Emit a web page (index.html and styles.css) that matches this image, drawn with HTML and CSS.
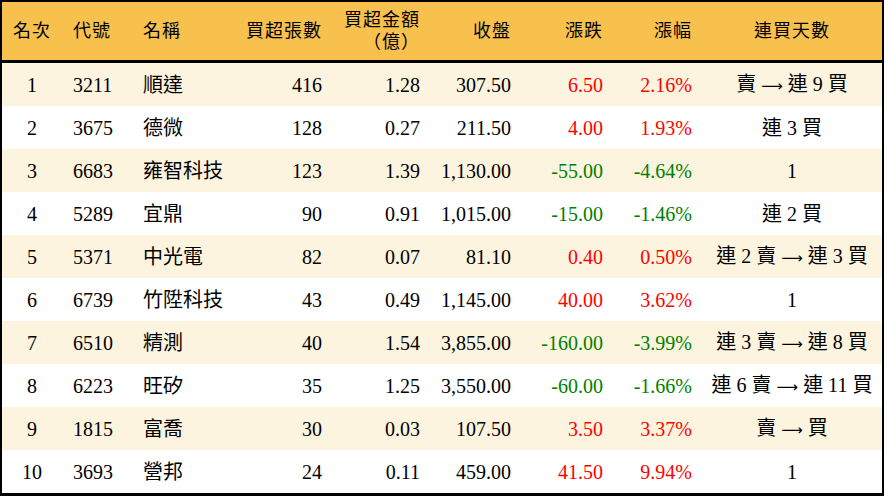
FILE: index.html
```html
<!DOCTYPE html>
<html lang="zh-Hant">
<head>
<meta charset="utf-8">
<link rel="stylesheet" href="styles.css">
</head>
<body>
<table class="rank">
  <colgroup>
    <col class="c1"><col class="c2"><col class="c3"><col class="c4"><col class="c5"><col class="c6"><col class="c7"><col class="c8"><col class="c9">
  </colgroup>
  <thead>
    <tr>
      <th class="ctr">名次</th>
      <th class="lft">代號</th>
      <th class="lft name">名稱</th>
      <th class="rgt">買超張數</th>
      <th class="rgt two">買超金額<br>（億）</th>
      <th class="rgt">收盤</th>
      <th class="rgt">漲跌</th>
      <th class="rgt">漲幅</th>
      <th class="ctr">連買天數</th>
    </tr>
  </thead>
  <tbody>
    <tr class="odd"><td class="ctr">1</td><td class="lft">3211</td><td class="lft name">順達</td><td class="rgt">416</td><td class="rgt">1.28</td><td class="rgt">307.50</td><td class="rgt up">6.50</td><td class="rgt up">2.16%</td><td class="ctr">賣 <span class="arr">⟶</span> 連 9 買</td></tr>
    <tr><td class="ctr">2</td><td class="lft">3675</td><td class="lft name">德微</td><td class="rgt">128</td><td class="rgt">0.27</td><td class="rgt">211.50</td><td class="rgt up">4.00</td><td class="rgt up">1.93%</td><td class="ctr">連 3 買</td></tr>
    <tr class="odd"><td class="ctr">3</td><td class="lft">6683</td><td class="lft name">雍智科技</td><td class="rgt">123</td><td class="rgt">1.39</td><td class="rgt">1,130.00</td><td class="rgt down">-55.00</td><td class="rgt down">-4.64%</td><td class="ctr">1</td></tr>
    <tr><td class="ctr">4</td><td class="lft">5289</td><td class="lft name">宜鼎</td><td class="rgt">90</td><td class="rgt">0.91</td><td class="rgt">1,015.00</td><td class="rgt down">-15.00</td><td class="rgt down">-1.46%</td><td class="ctr">連 2 買</td></tr>
    <tr class="odd"><td class="ctr">5</td><td class="lft">5371</td><td class="lft name">中光電</td><td class="rgt">82</td><td class="rgt">0.07</td><td class="rgt">81.10</td><td class="rgt up">0.40</td><td class="rgt up">0.50%</td><td class="ctr">連 2 賣 <span class="arr">⟶</span> 連 3 買</td></tr>
    <tr><td class="ctr">6</td><td class="lft">6739</td><td class="lft name">竹陞科技</td><td class="rgt">43</td><td class="rgt">0.49</td><td class="rgt">1,145.00</td><td class="rgt up">40.00</td><td class="rgt up">3.62%</td><td class="ctr">1</td></tr>
    <tr class="odd"><td class="ctr">7</td><td class="lft">6510</td><td class="lft name">精測</td><td class="rgt">40</td><td class="rgt">1.54</td><td class="rgt">3,855.00</td><td class="rgt down">-160.00</td><td class="rgt down">-3.99%</td><td class="ctr">連 3 賣 <span class="arr">⟶</span> 連 8 買</td></tr>
    <tr><td class="ctr">8</td><td class="lft">6223</td><td class="lft name">旺矽</td><td class="rgt">35</td><td class="rgt">1.25</td><td class="rgt">3,550.00</td><td class="rgt down">-60.00</td><td class="rgt down">-1.66%</td><td class="ctr">連 6 賣 <span class="arr">⟶</span> 連 11 買</td></tr>
    <tr class="odd"><td class="ctr">9</td><td class="lft">1815</td><td class="lft name">富喬</td><td class="rgt">30</td><td class="rgt">0.03</td><td class="rgt">107.50</td><td class="rgt up">3.50</td><td class="rgt up">3.37%</td><td class="ctr">賣 <span class="arr">⟶</span> 買</td></tr>
    <tr><td class="ctr">10</td><td class="lft">3693</td><td class="lft name">營邦</td><td class="rgt">24</td><td class="rgt">0.11</td><td class="rgt">459.00</td><td class="rgt up">41.50</td><td class="rgt up">9.94%</td><td class="ctr">1</td></tr>
  </tbody>
</table>
</body>
</html>
```
FILE: styles.css
```css
html, body {
  margin: 0;
  padding: 0;
  background: #ffffff;
}
body {
  font-family: "Liberation Serif", "Noto Sans CJK TC", serif;
  font-size: 20px;
  color: #000;
}
.rank {
  width: 884px;
  border-collapse: separate;
  border-spacing: 0;
  table-layout: fixed;
  border: 2px solid #000;
  border-bottom-width: 3px;
}
.c1 { width: 60px; }
.c2 { width: 71px; }
.c3 { width: 100px; }
.c4 { width: 99px; }
.c5 { width: 98px; }
.c6 { width: 91px; }
.c7 { width: 92px; }
.c8 { width: 89px; }
.c9 { width: 180px; }
thead tr {
  background: #f8c14e;
}
th {
  box-sizing: border-box;
  height: 61px;
  font-weight: normal;
  font-size: 18px;
  line-height: 22px;
  padding: 0 10px;
  letter-spacing: 1px;
  white-space: nowrap;
  border-bottom: 3px solid #000;
}
th.two { padding-bottom: 1px; }
tbody tr.odd { background: #fdf4df; }
td {
  box-sizing: border-box;
  height: 43px;
  padding: 0 10px;
  line-height: 22px;
  white-space: nowrap;
}
td.ctr { padding: 0; }
th.ctr { padding: 0; }
.ctr { text-align: center; }
.lft { text-align: left; padding-left: 11px; }
.lft.name { padding-left: 10px; }
.rgt { text-align: right; }
.up { color: #ff0000; }
.down { color: #008000; }
.arr {
  font-family: "DejaVu Sans", sans-serif;
  font-size: 15px;
}
```
